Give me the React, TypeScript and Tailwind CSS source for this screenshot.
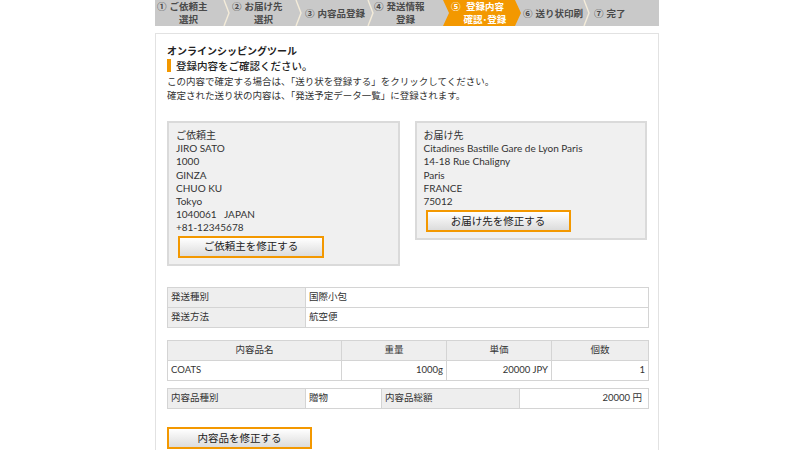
import React from "react";

const steps = [
    { n: "①", lines: ["ご依頼主", "選択"], pl: "pl-[2px]" },
    { n: "②", lines: ["お届け先", "選択"], pl: "pl-[5px]" },
    { n: "③", lines: ["内容品登録"], pl: "pl-[6px]" },
    { n: "④", lines: ["発送情報", "登録"], pl: "pl-[3px]" },
    { n: "⑤", lines: ["登録内容", "確認･登録"], pl: "pl-[8px]", active: true },
    { n: "⑥", lines: ["送り状印刷"], pl: "pl-[8px]" },
    { n: "⑦", lines: ["完了"], pl: "pl-[7px]" },
];

function Chevron() {
    return (
        <svg className="absolute right-[-4px] top-0 z-10" width="8" height="26" viewBox="0 0 8 26">
            <polyline points="1,0 6,13 1,26" fill="none" stroke="#f4ecd9" strokeWidth="1.4" />
        </svg>
    );
}

function StepLabel({ n, lines }: { n: string; lines: string[] }) {
    return (
        <>
            <span className="mr-[3px] block leading-[13px]">{n}</span>
            <span className="flex flex-col items-center">
                {lines.map((l) => (
                    <span key={l} className="block leading-[13px]">
                        {l}
                    </span>
                ))}
            </span>
        </>
    );
}

function StepBar() {
    return (
        <div className="flex h-[26px] w-[504px] overflow-hidden bg-[#c9c9c9] text-[9.5px] font-bold">
            {steps.map((s, i) => {
                const next = steps[i + 1];
                if (s.active) {
                    return (
                        <div
                            key={i}
                            className={`relative z-20 mr-[-6px] flex w-[78px] items-start ${s.pl} text-white bg-[#f39800] [clip-path:polygon(0_0,calc(100%-6px)_0,100%_50%,calc(100%-6px)_100%,0_100%,6px_50%)]`}
                        >
                            <StepLabel n={s.n} lines={s.lines} />
                        </div>
                    );
                }
                const single = s.lines.length === 1;
                return (
                    <div
                        key={i}
                        className={`relative flex w-[72px] text-[#4a4a4a] ${s.pl} ${single ? "items-center" : "items-start"}`}
                    >
                        <StepLabel n={s.n} lines={s.lines} />
                        {next && !next.active && <Chevron />}
                    </div>
                );
            })}
        </div>
    );
}

function EditButton({ label, width }: { label: string; width: string }) {
    return (
        <button
            className={`${width} h-[22px] border-2 border-[#f39800] bg-gradient-to-b from-white to-[#dcdcdc] text-[10.5px] leading-none text-[#222]`}
            style={{ fontFamily: '"Noto Sans CJK JP", sans-serif' }}
        >
            {label}
        </button>
    );
}

const cell = "border border-[#d4d4d4] px-[3px] h-[20px]";
const latin = { fontFamily: 'Lato, "Noto Sans CJK JP", sans-serif' };

export default function App() {
    return (
        <main
            className="min-h-screen bg-white text-[#333]"
            style={{ fontFamily: '"Noto Sans CJK JP", "Noto Sans", sans-serif' }}
        >
            <div className="ml-[155px] w-[504px]">
                <StepBar />
                <div className="mt-[7px] border border-[#e2e2e2] px-[11px] pt-[10px] pb-[20px]">
                    <p className="text-[10px] font-bold leading-[13px] text-[#222]">オンラインシッピングツール</p>
                    <div className="mt-[1px] flex items-center gap-[5px]">
                        <div className="h-[13px] w-[4px] bg-[#f39800]" />
                        <p className="text-[10.5px] font-medium leading-[15px] text-[#222]">登録内容をご確認ください。</p>
                    </div>
                    <p className="mt-[1px] text-[9.5px] leading-[14px]">
                        この内容で確定する場合は、「送り状を登録する」をクリックしてください。
                    </p>
                    <p className="text-[9.5px] leading-[14px]">確定された送り状の内容は、「発送予定データ一覧」に登録されます。</p>

                    <div className="mt-[19px] flex items-start gap-[15px] text-[10px] leading-[13.2px]" style={latin}>
                        <div className="w-[234px] border-2 border-[#dadada] bg-[#f0f0f0] px-[7px] pt-[6px] pb-[6px]">
                            <p>ご依頼主</p>
                            <p>JIRO SATO</p>
                            <p>1000</p>
                            <p>GINZA</p>
                            <p>CHUO KU</p>
                            <p>Tokyo</p>
                            <p>1040061&nbsp;&nbsp;&nbsp;JAPAN</p>
                            <p>+81-12345678</p>
                            <div className="mt-[1px] pl-[2px]">
                                <EditButton label="ご依頼主を修正する" width="w-[146px]" />
                            </div>
                        </div>
                        <div className="w-[234px] border-2 border-[#dadada] bg-[#f0f0f0] px-[7px] pt-[6px] pb-[6px]">
                            <p>お届け先</p>
                            <p>Citadines Bastille Gare de Lyon Paris</p>
                            <p>14-18 Rue Chaligny</p>
                            <p>Paris</p>
                            <p>FRANCE</p>
                            <p>75012</p>
                            <div className="mt-[2px] pl-[2px]">
                                <EditButton label="お届け先を修正する" width="w-[145px]" />
                            </div>
                        </div>
                    </div>

                    <table className="mt-[21px] w-[482px] border-collapse text-[9.5px]" style={latin}>
                        <tbody>
                            <tr>
                                <td className={`${cell} w-[138px] bg-[#eeeeee]`}>発送種別</td>
                                <td className={cell}>国際小包</td>
                            </tr>
                            <tr>
                                <td className={`${cell} bg-[#eeeeee]`}>発送方法</td>
                                <td className={cell}>航空便</td>
                            </tr>
                        </tbody>
                    </table>

                    <table className="mt-[12px] w-[482px] border-collapse text-[9.5px]" style={latin}>
                        <tbody>
                            <tr className="bg-[#eeeeee]">
                                <td className={`${cell} w-[174px] text-center`}>内容品名</td>
                                <td className={`${cell} w-[105px] text-center`}>重量</td>
                                <td className={`${cell} w-[105px] text-center`}>単価</td>
                                <td className={`${cell} text-center`}>個数</td>
                            </tr>
                            <tr>
                                <td className={cell}>COATS</td>
                                <td className={`${cell} text-right`}>1000g</td>
                                <td className={`${cell} text-right`}>20000 JPY</td>
                                <td className={`${cell} text-right`}>1</td>
                            </tr>
                        </tbody>
                    </table>

                    <table className="mt-[7px] w-[482px] border-collapse text-[9.5px]" style={latin}>
                        <tbody>
                            <tr>
                                <td className={`${cell} w-[138px] bg-[#eeeeee]`}>内容品種別</td>
                                <td className={`${cell} w-[76px]`}>贈物</td>
                                <td className={`${cell} w-[138px] bg-[#eeeeee]`}>内容品総額</td>
                                <td className={`${cell} text-right pr-[6px]`}>20000 円</td>
                            </tr>
                        </tbody>
                    </table>

                    <div className="mt-[14px]">
                        <EditButton label="内容品を修正する" width="w-[145px]" />
                    </div>
                </div>
            </div>
        </main>
    );
}
